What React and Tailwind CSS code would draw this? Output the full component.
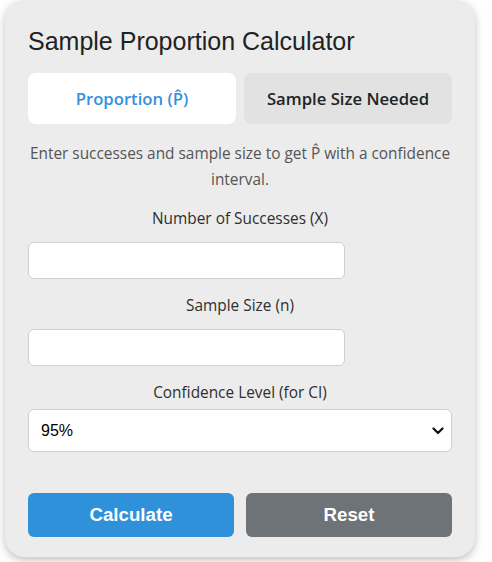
import React from "react";

export default function App() {
  const seg = { fontFamily: '"Open Sans", "Noto Sans", sans-serif' };
  return (
    <div className="min-h-[562px] w-[492px] bg-white">
      <div className="ml-[5px] w-[470px] rounded-[20px] bg-[#ebeceb] px-[23px] pt-[26px] pb-[20px] shadow-[0_3px_8px_rgba(0,0,0,0.25)]">
        <h1
          className="text-[25px] leading-[30px] text-[#222]"
          style={{ fontFamily: '"Liberation Sans", Arial, sans-serif' }}
        >
          Sample Proportion Calculator
        </h1>
        <div className="mt-[17px] flex gap-[8px]" style={seg}>
          <button className="h-[51px] flex-1 rounded-[8px] bg-white text-[16.7px] font-semibold text-[#3590dc]">
            Proportion (P̂)
          </button>
          <button className="h-[51px] flex-1 rounded-[8px] bg-[#e1e2e1] text-[16.7px] font-semibold text-[#222]">
            Sample Size Needed
          </button>
        </div>
        <p className="mt-[17px] text-center text-[15.4px] leading-[26px] text-[#555]" style={seg}>
          Enter successes and sample size to get P̂ with a confidence interval.
        </p>
        <label className="mt-[15px] block text-center text-[15.4px] leading-[22px] text-[#2f2f2f]" style={seg}>
          Number of Successes (X)
        </label>
        <input
          className="mt-[12px] block h-[37px] w-[317px] rounded-[6px] border border-[#cfd0cf] bg-white"
          type="text"
        />
        <label className="mt-[16px] block text-center text-[15.4px] leading-[22px] text-[#2f2f2f]" style={seg}>
          Sample Size (n)
        </label>
        <input
          className="mt-[12px] block h-[37px] w-[317px] rounded-[6px] border border-[#cfd0cf] bg-white"
          type="text"
        />
        <label className="mt-[16px] block text-center text-[15.4px] leading-[22px] text-[#2f2f2f]" style={seg}>
          Confidence Level (for CI)
        </label>
        <div className="relative mt-[5px] h-[43px] w-full rounded-[6px] border border-[#cfd0cf] bg-white">
          <div
            className="flex h-full items-center pl-[12px] text-[16px] text-black"
            style={{ fontFamily: '"Liberation Sans", Arial, sans-serif' }}
          >
            95%
          </div>
          <svg
            className="absolute right-[7px] top-[17px]"
            width="12"
            height="8"
            viewBox="0 0 12 8"
          >
            <path d="M1.5 1.5 L6 6 L10.5 1.5" fill="none" stroke="#111" strokeWidth="2.2" strokeLinecap="round" strokeLinejoin="round" />
          </svg>
        </div>
        <div
          className="mt-[41px] flex gap-[12px]"
          style={{ fontFamily: '"Liberation Sans", Arial, sans-serif' }}
        >
          <button className="h-[44px] flex-1 rounded-[6px] bg-[#2f91d9] text-[18.7px] font-bold text-white">
            Calculate
          </button>
          <button className="h-[44px] flex-1 rounded-[6px] bg-[#6d7376] text-[18.7px] font-bold text-white">
            Reset
          </button>
        </div>
      </div>
    </div>
  );
}
